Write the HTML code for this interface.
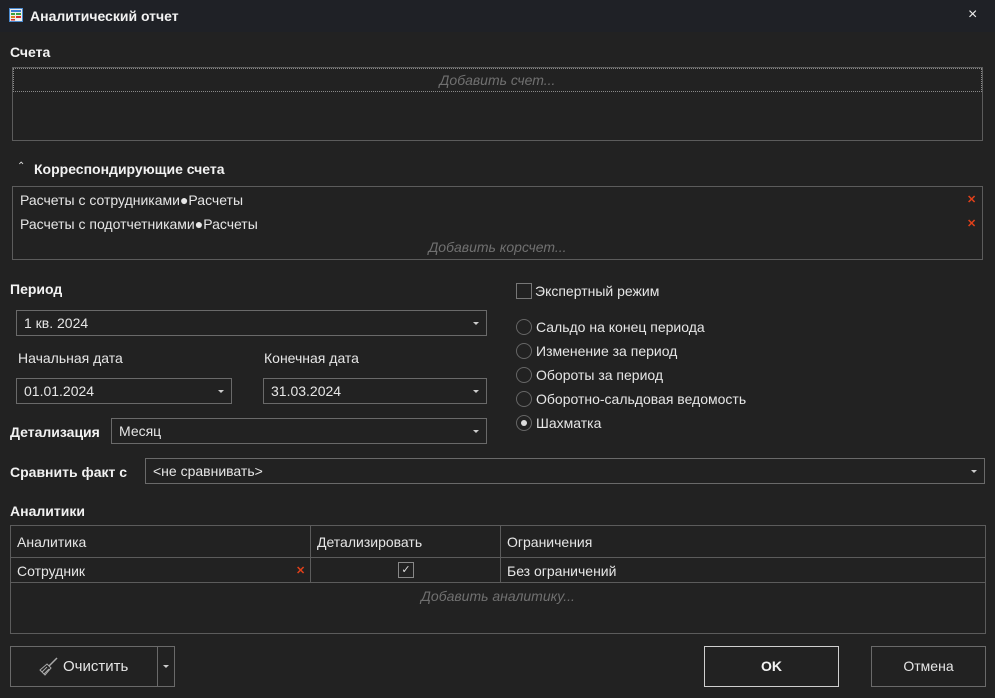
<!DOCTYPE html>
<html><head><meta charset="utf-8"><style>
*{box-sizing:border-box;margin:0;padding:0}
body{width:995px;height:698px;background:#222222;font-family:"Liberation Sans",sans-serif;font-size:14px;color:#e6e6e6;position:relative;overflow:hidden}
.a{position:absolute;white-space:nowrap}
.b{font-weight:bold;color:#f2f2f2}
.box{position:absolute;border:1px solid #5c5c5c}
.ph{position:absolute;color:#707070;font-style:italic;text-align:center}
.cb{position:absolute;border:1px solid #6a6a6a;background:#222}
.cb span{position:absolute;left:7px;top:4px}
.cb i{position:absolute;right:7px;top:11px;width:0;height:0;border-left:3px solid transparent;border-right:3px solid transparent;border-top:3px solid #ccc}
.x{position:absolute;color:#e0401a;font-size:11px;font-weight:bold}
.r{position:absolute;width:16px;height:16px;border:1px solid #666;border-radius:50%}
</style></head><body>
<div class="a" style="left:0;top:0;width:995px;height:32px;background:#1f2126"></div>
<svg class="a" style="left:9px;top:8px" width="14" height="14"><rect x="0.5" y="0.5" width="13" height="13" fill="#eee" stroke="#4a8ad0"/><rect x="2" y="2" width="10" height="2" fill="#3a7bd5"/><rect x="2" y="5" width="4" height="2" fill="#3aa040"/><rect x="7" y="5" width="5" height="2" fill="#3aa040"/><rect x="2" y="8" width="4" height="2" fill="#e08020"/><rect x="7" y="8" width="5" height="2" fill="#d03030"/><rect x="2" y="11" width="4" height="1.5" fill="#d03030"/></svg>
<div class="a b" style="left:30px;top:8px">Аналитический отчет</div>
<div class="a" style="left:968px;top:6px;font-size:16px;color:#eee">×</div>

<div class="a b" style="left:10px;top:44px">Счета</div>
<div class="box" style="left:12px;top:67px;width:971px;height:74px"></div>
<div class="a" style="left:13px;top:68px;width:969px;height:24px;border:1px dotted #8a8a8a"></div>
<div class="ph" style="left:12px;top:72px;width:971px">Добавить счет...</div>

<div class="a" style="left:17px;top:161px;font-size:10px;color:#ddd">⌃</div>
<div class="a b" style="left:34px;top:161px">Корреспондирующие счета</div>
<div class="box" style="left:12px;top:186px;width:971px;height:74px"></div>
<div class="a" style="left:20px;top:192px">Расчеты с сотрудниками●Расчеты</div>
<div class="a" style="left:20px;top:216px">Расчеты с подотчетниками●Расчеты</div>
<div class="x" style="left:967px;top:193px">✕</div>
<div class="x" style="left:967px;top:217px">✕</div>
<div class="ph" style="left:12px;top:239px;width:971px">Добавить корсчет...</div>

<div class="a b" style="left:10px;top:281px">Период</div>
<div class="cb" style="left:16px;top:310px;width:471px;height:26px"><span>1 кв. 2024</span><i></i></div>
<div class="a" style="left:18px;top:350px">Начальная дата</div>
<div class="a" style="left:264px;top:350px">Конечная дата</div>
<div class="cb" style="left:16px;top:378px;width:216px;height:26px"><span>01.01.2024</span><i></i></div>
<div class="cb" style="left:263px;top:378px;width:224px;height:26px"><span>31.03.2024</span><i></i></div>
<div class="a b" style="left:10px;top:424px">Детализация</div>
<div class="cb" style="left:111px;top:418px;width:376px;height:26px"><span>Месяц</span><i></i></div>
<div class="a b" style="left:10px;top:464px">Сравнить факт с</div>
<div class="cb" style="left:145px;top:458px;width:840px;height:26px"><span>&lt;не сравнивать&gt;</span><i></i></div>

<div class="a" style="left:516px;top:283px;width:16px;height:16px;border:1px solid #777"></div>
<div class="a" style="left:535px;top:283px">Экспертный режим</div>
<div class="r" style="left:516px;top:319px"></div><div class="a" style="left:536px;top:319px">Сальдо на конец периода</div>
<div class="r" style="left:516px;top:343px"></div><div class="a" style="left:536px;top:343px">Изменение за период</div>
<div class="r" style="left:516px;top:367px"></div><div class="a" style="left:536px;top:367px">Обороты за период</div>
<div class="r" style="left:516px;top:391px"></div><div class="a" style="left:536px;top:391px">Оборотно-сальдовая ведомость</div>
<div class="r" style="left:516px;top:415px"><div style="position:absolute;left:4px;top:4px;width:6px;height:6px;border-radius:50%;background:#ddd"></div></div><div class="a" style="left:536px;top:415px">Шахматка</div>

<div class="a b" style="left:10px;top:503px">Аналитики</div>
<div class="box" style="left:10px;top:525px;width:976px;height:109px"></div>
<div class="a" style="left:11px;top:557px;width:974px;height:1px;background:#5c5c5c"></div>
<div class="a" style="left:11px;top:582px;width:974px;height:1px;background:#5c5c5c"></div>
<div class="a" style="left:310px;top:526px;width:1px;height:56px;background:#5c5c5c"></div>
<div class="a" style="left:500px;top:526px;width:1px;height:56px;background:#5c5c5c"></div>
<div class="a" style="left:17px;top:534px">Аналитика</div>
<div class="a" style="left:317px;top:534px">Детализировать</div>
<div class="a" style="left:507px;top:534px">Ограничения</div>
<div class="a" style="left:17px;top:563px">Сотрудник</div>
<div class="x" style="left:296px;top:564px">✕</div>
<div class="a" style="left:398px;top:562px;width:16px;height:16px;border:1px solid #888;font-size:11px;text-align:center;line-height:14px;color:#ddd">✓</div>
<div class="a" style="left:507px;top:563px">Без ограничений</div>
<div class="ph" style="left:10px;top:588px;width:976px">Добавить аналитику...</div>

<div class="box" style="left:10px;top:646px;width:148px;height:41px;border-color:#6a6a6a"></div>
<div class="box" style="left:157px;top:646px;width:18px;height:41px;border-color:#6a6a6a"></div>
<div class="a" style="left:163px;top:665px;border-left:3px solid transparent;border-right:3px solid transparent;border-top:3px solid #ccc"></div>
<svg class="a" style="left:39px;top:656px" width="20" height="20"><path d="M18 2 L10 10" stroke="#aaa" stroke-width="1.5"/><path d="M8 8 L12 12 L6 19 L1 14 Z" fill="none" stroke="#aaa"/><path d="M3 16 L8 11 M5 18 L10 13" stroke="#aaa"/></svg>
<div class="a" style="left:63px;top:658px;font-size:15px">Очистить</div>
<div class="box" style="left:704px;top:646px;width:135px;height:41px;border-color:#cfcfcf"></div>
<div class="a b" style="left:704px;top:658px;width:135px;text-align:center">OK</div>
<div class="box" style="left:871px;top:646px;width:115px;height:41px;border-color:#6a6a6a"></div>
<div class="a" style="left:871px;top:658px;width:115px;text-align:center">Отмена</div>
</body></html>
